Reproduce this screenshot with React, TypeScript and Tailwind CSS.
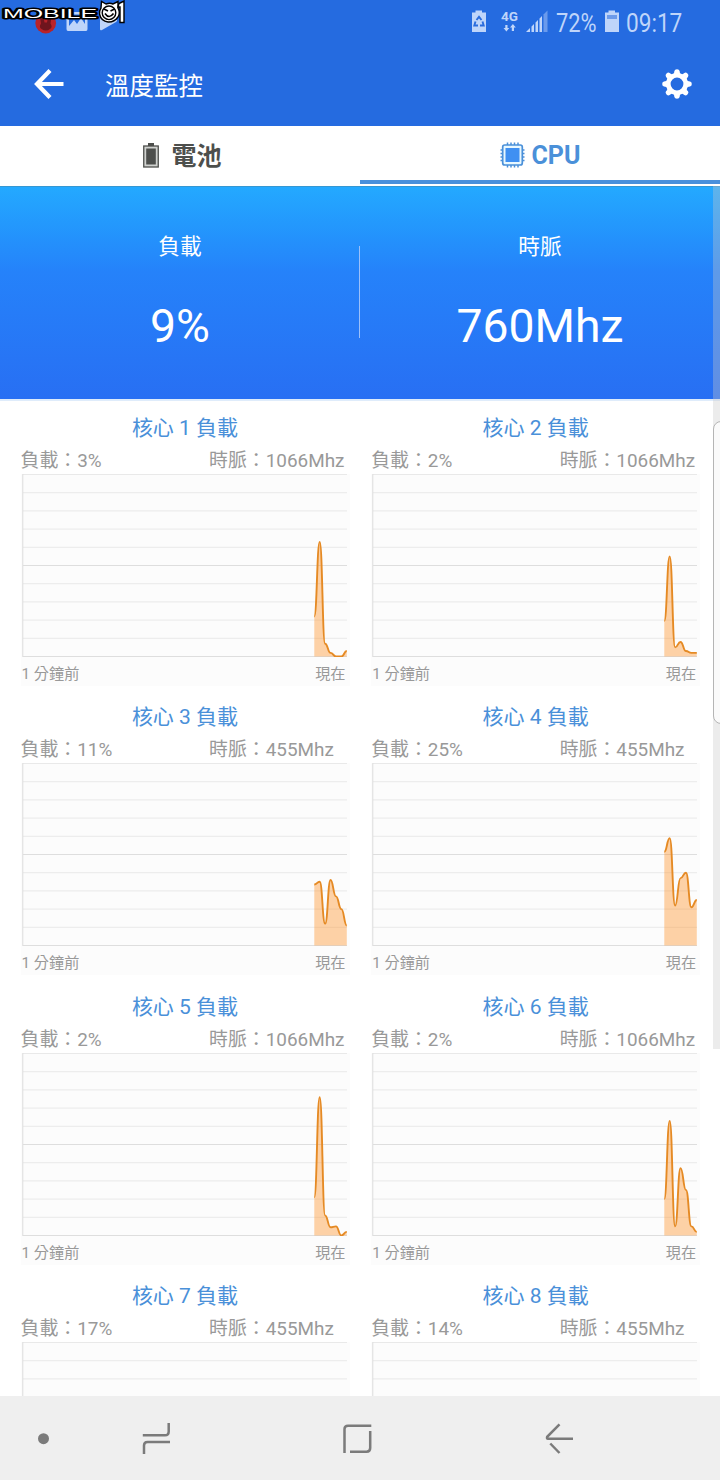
type Core = {
  id: number;
  load: number;
  clock: number;
  history: number[];
};

const cores: Core[] = [
  { id: 1, load: 3, clock: 1066, history: [22, 63, 7, 2, 0, 0, 3] },
  { id: 2, load: 2, clock: 1066, history: [19.5, 55, 5, 8, 3, 2, 2] },
  { id: 3, load: 11, clock: 455, history: [33.5, 35, 12, 36, 27, 20, 11] },
  { id: 4, load: 25, clock: 455, history: [51.5, 59, 22, 37, 40, 21, 25] },
  { id: 5, load: 2, clock: 1066, history: [21, 76, 11, 4.5, 5, 0, 2] },
  { id: 6, load: 2, clock: 1066, history: [20, 63, 5, 37, 25, 5, 2] },
  { id: 7, load: 17, clock: 455, history: [] },
  { id: 8, load: 14, clock: 455, history: [] },
];

const PLOT_RIGHT = 325.8;
const PLOT_BOTTOM = 182.5;
const STEP = 5.42;

function curve(history: number[]) {
  const points = history.map((value, i) => ({
    x: PLOT_RIGHT - (history.length - 1 - i) * STEP,
    y: PLOT_BOTTOM - value * 1.82,
  }));
  return points
    .map(({ x, y }, i) => {
      if (i === 0) return `M${x} ${y}`;
      const prev = points[i - 1];
      const mid = (prev.x + x) / 2;
      return `C${mid} ${prev.y} ${mid} ${y} ${x} ${y}`;
    })
    .join(" ");
}

function Chart({ history }: { history: number[] }) {
  const line = curve(history);
  const left = PLOT_RIGHT - (history.length - 1) * STEP;

  return (
    <svg width="329" height="183" className="block shrink-0">
      {Array.from({ length: 11 }, (_, i) => (
        <line
          key={i}
          x1="2"
          x2="326"
          y1={0.5 + i * 18.2}
          y2={0.5 + i * 18.2}
          stroke={i === 5 || i === 10 ? "#dedede" : "#e9e9e9"}
        />
      ))}
      <line x1="1.800" x2="1.800" y1="0" y2="183" stroke="#dcdcdc" />
      {history.length > 0 && (
        <>
          <path
            d={`${line} V${PLOT_BOTTOM} H${left} Z`}
            fill="#ff8c1a"
            fillOpacity="0.38"
          />
          <path d={line} fill="none" stroke="#e58a24" strokeWidth="1.9" />
        </>
      )}
    </svg>
  );
}

function CoreCard({ id, load, clock, history }: Core) {
  return (
    <div className="flex h-[289.3px] flex-col">
      <h2 className="h-8 text-center text-[21px] leading-[34px] text-[#4a90d9]">
        核心 {id} 負載
      </h2>
      <div className="flex h-[31px] text-[18.9px] leading-[36px] text-[#999]">
        <span className="w-[188.5px]">負載：{load}%</span>
        <span className="whitespace-nowrap">時脈：{clock}Mhz</span>
      </div>
      <div className="bg-[#fcfcfc]">
        <Chart history={history} />
        {history.length > 0 && (
          <div className="flex h-[29px] justify-between pr-[4px] pl-px text-[15.2px] leading-[34px] text-[#999]">
            <span>1 分鐘前</span>
            <span>現在</span>
          </div>
        )}
      </div>
    </div>
  );
}

function Logo() {
  return (
    <svg width="128" height="26" className="absolute top-0 left-0">
      <text
        x="3"
        y="17.500"
        fontSize="12.500"
        textLength="94"
        lengthAdjust="spacingAndGlyphs"
        fill="#fff"
        stroke="#000"
        strokeWidth="3"
        paintOrder="stroke"
        strokeLinejoin="round"
        fontFamily="Liberation Sans"
      >
        MOBILE
      </text>
      <g fill="#fff" stroke="#000" strokeWidth="1.4">
        <path d="M101 8 L101.500 1.500 L106 4 Q110 2.500 113 4 L118 1.500 L118 8 Q120.500 13 118 17 Q114 22.500 108 22 Q101 21 99.500 14 Q99 11 101 8Z" />
        <path d="M119 3.500 L124 1 V22.500 H120 V7 H118Z" />
      </g>
      <g fill="none" stroke="#000" strokeWidth="1.6">
        <circle cx="109" cy="12.800" r="6.800" strokeWidth="1.400" />
        <path d="M104 9 L108 11 M114.500 9 L110.500 11" />
        <path d="M105 13.500 Q109 19.500 113.500 13.500" />
      </g>
    </svg>
  );
}

function StatusBar() {
  return (
    <div className="relative h-[42px] text-[#bfd5fa]">
      <svg width="720" height="42" fill="currentColor" className="block">
        {/* notifications */}
        <circle cx="45.7" cy="23" r="10.4" fill="#b92329" />
        <path
          d="M39.500 14 Q42 13 43.500 17 L44.500 22.500 H47 L48 17 Q49.500 13 52 14 L50.500 23.500 Q53 27 50 29 Q46 32 41.500 29 Q38.500 27 41 23.500Z"
          fill="#6e151d"
        />
        <path
          fillRule="evenodd"
          d="M68 12 H86 Q87.500 12 87.500 13.500 V29 Q87.500 31 86 31 H68 Q66.500 31 66.500 29 V13.500 Q66.500 12 68 12Z M69 26 L74 20 L77 24 L81 18 L85 24 V14.500 H69Z"
        />
        <path d="M100 11 L117 20 Q117.500 21 116 22 L102 30 Q100 31 100 29Z" />
        {/* battery saver */}
        <path d="M472 12.500 H475.500 V10.500 H482 V12.500 H486 V32 H472Z" />
        <g fill="none" stroke="#2a6cdd" strokeWidth="1.900">
          <path d="M476.500 20 L479 16.800 L481.500 20" />
          <path d="M475.500 21.500 L474.300 25.500 H478" />
          <path d="M482.500 21.500 L483.700 25.500 H480" />
        </g>
        <path d="M505.300 25 h2.200 v3 h1.800 l-2.900 3.500 l-2.900 -3.500 h1.800Z" />
        <path d="M511.800 31 h2.200 v-3.500 h1.800 l-2.900 -3.500 l-2.900 3.500 h1.800Z" />
        {/* signal */}
        <path d="M526 32 L530 28 V32Z M531.500 26.500 L534 24 V32 H531.500Z M535.500 22.500 L538 20 V32 H535.500Z M539.500 18.500 L542 16 V32 H539.500Z" />
        <path d="M543.500 14.500 L547.500 10.500 V32 H543.500Z" opacity=".45" />
        {/* battery */}
        <path d="M605 12.500 H608.500 V10.500 H615 V12.500 H619 V32 H605Z" />
        <path d="M607 15 H617 V19 H607Z" fill="#6d9bea" />
      </svg>
      <span className="absolute top-[8px] left-[501px] text-[13.5px] leading-4 font-bold">
        4G
      </span>
      <span className="absolute top-[7px] left-[556px] origin-left scale-x-[0.84] text-[26px] leading-8">
        72%
      </span>
      <span className="absolute top-[7px] left-[626px] origin-left scale-x-[0.87] text-[26px] leading-8">
        09:17
      </span>
      <Logo />
    </div>
  );
}

function BackIcon() {
  return (
    <svg width="30" height="30" viewBox="0 0 30 30" fill="none" stroke="#fff" strokeWidth="4.200">
      <path d="M16 1.500 L3 15 L16 28.500 M3 15 H29.500" />
    </svg>
  );
}

function GearIcon() {
  return (
    <svg width="30" height="30" viewBox="-15 -15 30 30">
      <circle r="8.700" fill="none" stroke="#fff" strokeWidth="4.600" />
      {[0, 45, 90, 135, 180, 225, 270, 315].map((angle) => (
        <path
          key={angle}
          transform={`rotate(${angle})`}
          d="M-4.200 -9 Q-2.600 -10.500 -2.600 -13 Q-2.300 -14.800 0 -14.800 Q2.300 -14.800 2.600 -13 Q2.600 -10.500 4.200 -9Z"
          fill="#fff"
        />
      ))}
    </svg>
  );
}

function CpuIcon() {
  return (
    <svg width="25" height="26" viewBox="0 0 25 26" className="shrink-0">
      <path
        d="M7.500 .5 V3 M11 .5 V3 M14.500 .5 V3 M18 .5 V3 M7.500 23 V25.500 M11 23 V25.500 M14.500 23 V25.500 M18 23 V25.500 M.5 8 H3 M.5 11.500 H3 M.5 15 H3 M.5 18.500 H3 M22 8 H24.500 M22 11.500 H24.500 M22 15 H24.500 M22 18.500 H24.500"
        stroke="#4a90d9"
        strokeWidth="1.500"
      />
      <rect x="2.700" y="3" width="19.600" height="20" rx="2" fill="#e8f8ff" stroke="#4a90d9" strokeWidth="1.700" />
      <rect x="5.500" y="6" width="14" height="14" fill="#3f90f2" />
    </svg>
  );
}

function Tabs() {
  return (
    <div className="flex h-[60px] shrink-0 bg-white text-[25px] font-bold">
      <div className="flex w-1/2 items-center justify-center gap-3 pl-[5px] text-[#4d4f4c]">
        <svg width="16" height="25" viewBox="0 0 16 25" className="-mt-px">
          <path d="M5 0 H11 V3 H5Z" fill="#4d4f4c" />
          <rect x=".75" y="3" width="14.500" height="21" fill="#d0d2cf" stroke="#4d4f4c" strokeWidth="1.300" />
          <rect x="3.200" y="5.500" width="9.600" height="16" fill="#4d4f4c" />
        </svg>
        <span className="pt-px">電池</span>
      </div>
      <div className="mb-[2px] flex w-1/2 items-center justify-center gap-[7px] border-b-4 border-[#4990dc] pt-[3px] text-[#4a90d9]">
        <CpuIcon />
        <span className="pt-[3px]">CPU</span>
      </div>
    </div>
  );
}

function Metric({ label, value }: { label: string; value: string }) {
  return (
    <div className="flex flex-1 flex-col items-center text-white">
      <span className="mt-[44px] text-[21.7px] leading-8">{label}</span>
      <span className="mt-[31px] text-[46.3px] leading-[64px]">{value}</span>
    </div>
  );
}

function NavBar() {
  return (
    <div className="h-[84px] shrink-0 bg-[#efefef]">
      <svg width="720" height="84" viewBox="0 1396 720 84" fill="none" stroke="#7b7b7b" strokeWidth="2.500" className="block">
        <circle cx="43.500" cy="1438.700" r="5.500" fill="#7b7b7b" stroke="none" />
        <path d="M168.700 1423 V1431.500 Q168.700 1435.300 165 1435.300 H142.800" />
        <path d="M170 1442 H147.500 Q144 1442 144 1445.500 V1454" />
        <path d="M344.500 1453 V1429 Q344.500 1425.700 348 1425.700 H371.300" />
        <path d="M370.200 1431 V1448 Q370.200 1451.700 366.500 1451.700 H350" />
        <path d="M559.500 1424.300 L547.200 1436.800 Q546.500 1438.700 548 1438.700 H573" />
        <path d="M550.300 1443.500 L559.500 1453" />
      </svg>
    </div>
  );
}

export default function App() {
  return (
    <div className="relative flex h-[1480px] w-[720px] flex-col overflow-hidden bg-white font-[Roboto,'Noto_Sans_CJK_TC',sans-serif]">
      <header className="h-[126px] shrink-0 bg-[#256be0]">
        <StatusBar />
        <div className="flex h-[84px] items-center pr-7 pl-[34px] text-white">
          <BackIcon />
          <h1 className="ml-[41px] flex-1 pt-[6px] text-[24.5px]">溫度監控</h1>
          <GearIcon />
        </div>
      </header>

      <Tabs />

      <section className="flex h-[213px] shrink-0 border-t border-[#3597d2] bg-linear-to-b from-[#24a9ff] via-[#2582fa] via-40% to-[#286ff3]">
        <Metric label="負載" value="9%" />
        <div className="mt-[59px] -ml-px h-[92px] w-px bg-[#9cc0fa]" />
        <Metric label="時脈" value="760Mhz" />
      </section>

      <main className="grid min-h-0 flex-1 grid-cols-[329px_329px] content-start gap-x-[21.7px] overflow-hidden border-t-2 border-[#dfecfb] pt-[10px] pl-[20.5px]">
        {cores.map((core) => (
          <CoreCard key={core.id} {...core} />
        ))}
      </main>

      <NavBar />

      {/* scroll track and the edge panel handle over it */}
      <div className="absolute top-[186px] right-0 h-[863px] w-[7px] bg-[#c8c8c8]/35" />
      <div className="absolute top-[421px] -right-2 h-[303px] w-[15px] rounded-l-lg border border-[#b5b5b5] bg-[#fafafa]" />
    </div>
  );
}
